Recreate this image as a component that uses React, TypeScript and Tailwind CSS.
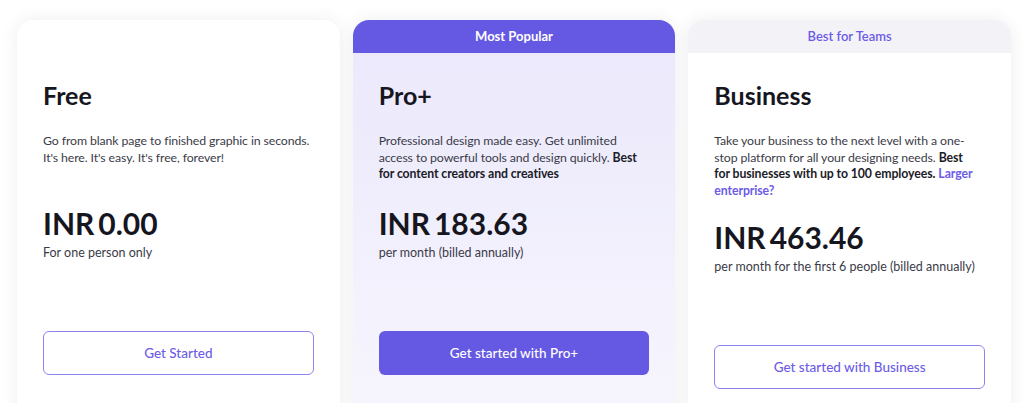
import React from 'react';

type Plan = {
  name: string;
  badge?: string;
  badgeStyle?: 'primary' | 'muted';
  description: React.ReactNode;
  price: string;
  note: string;
  cta: string;
  filled?: boolean;
  highlight?: boolean;
};

const plans: Plan[] = [
  {
    name: 'Free',
    description: (
      <>Go from blank page to finished graphic in seconds. It's here. It's easy. It's free, forever!</>
    ),
    price: '0.00',
    note: 'For one person only',
    cta: 'Get Started',
  },
  {
    name: 'Pro+',
    badge: 'Most Popular',
    badgeStyle: 'primary',
    highlight: true,
    description: (
      <>
        Professional design made easy. Get unlimited access to powerful tools and design quickly.{' '}
        <span className="font-bold text-[#1c1c28]">Best for content creators and creatives</span>
      </>
    ),
    price: '183.63',
    note: 'per month (billed annually)',
    cta: 'Get started with Pro+',
    filled: true,
  },
  {
    name: 'Business',
    badge: 'Best for Teams',
    badgeStyle: 'muted',
    description: (
      <>
        Take your business to the next level with a one-stop platform for all your designing needs.{' '}
        <span className="font-bold text-[#1c1c28]">Best for{'\u00a0'}businesses with up to 100 employees.</span>{' '}
        <a className="font-bold text-[#6c5ce7]">Larger enterprise?</a>
      </>
    ),
    price: '463.46',
    note: 'per month for the first 6 people (billed annually)',
    cta: 'Get started with Business',
  },
];

const PlanCard: React.FC<{ plan: Plan }> = ({ plan }) => {
  const bandClass =
    plan.badgeStyle === 'primary'
      ? 'bg-[#6558e2] text-white font-bold'
      : plan.badgeStyle === 'muted'
      ? 'bg-[#f3f3f7] text-[#6c5ce7] font-semibold'
      : 'bg-white';

  return (
    <div className="flex flex-col rounded-2xl overflow-hidden bg-white shadow-[0_0_18px_rgba(0,0,0,0.07)]">
      <div className={`h-[33px] flex items-center justify-center text-[13px] ${bandClass}`}>
        {plan.badge}
      </div>
      <div
        className={`flex-1 flex flex-col px-[26px] pt-[26px] pb-[60px] ${
          plan.highlight ? 'bg-gradient-to-b from-[#ebe9fb] to-[#f8f7fe]' : 'bg-white'
        }`}
      >
        <h2 className="text-[25px] leading-[32px] font-bold text-[#16161f]">{plan.name}</h2>
        <p className="mt-[22px] min-h-[53px] text-[12.3px] leading-[16.7px] tracking-[-0.1px] text-[#3b3b48]">
          {plan.description}
        </p>
        <p className="mt-[19px] text-[30px] leading-[36px] font-bold text-[#16161f]">
          INR<span className="ml-[4px]">{plan.price}</span>
        </p>
        <p className="mt-[3px] text-[12.5px] leading-[17px] text-[#3b3b48]">{plan.note}</p>
        <button
          className={`mt-[70px] h-[44px] w-full rounded-[6px] text-[13.5px] font-medium ${
            plan.filled
              ? 'bg-[#6558e2] text-white'
              : 'bg-white border border-[#8e84ee] text-[#6c5ce7]'
          }`}
        >
          {plan.cta}
        </button>
      </div>
    </div>
  );
};

const App: React.FC = () => {
  return (
    <div
      className="min-h-screen bg-white pl-[17px] pr-[13px] pt-[20px]"
      style={{ fontFamily: 'Lato, "Noto Sans", sans-serif' }}
    >
      <div className="grid grid-cols-3 gap-[13px]">
        {plans.map((p) => (
          <PlanCard key={p.name} plan={p} />
        ))}
      </div>
    </div>
  );
};

export default App;
